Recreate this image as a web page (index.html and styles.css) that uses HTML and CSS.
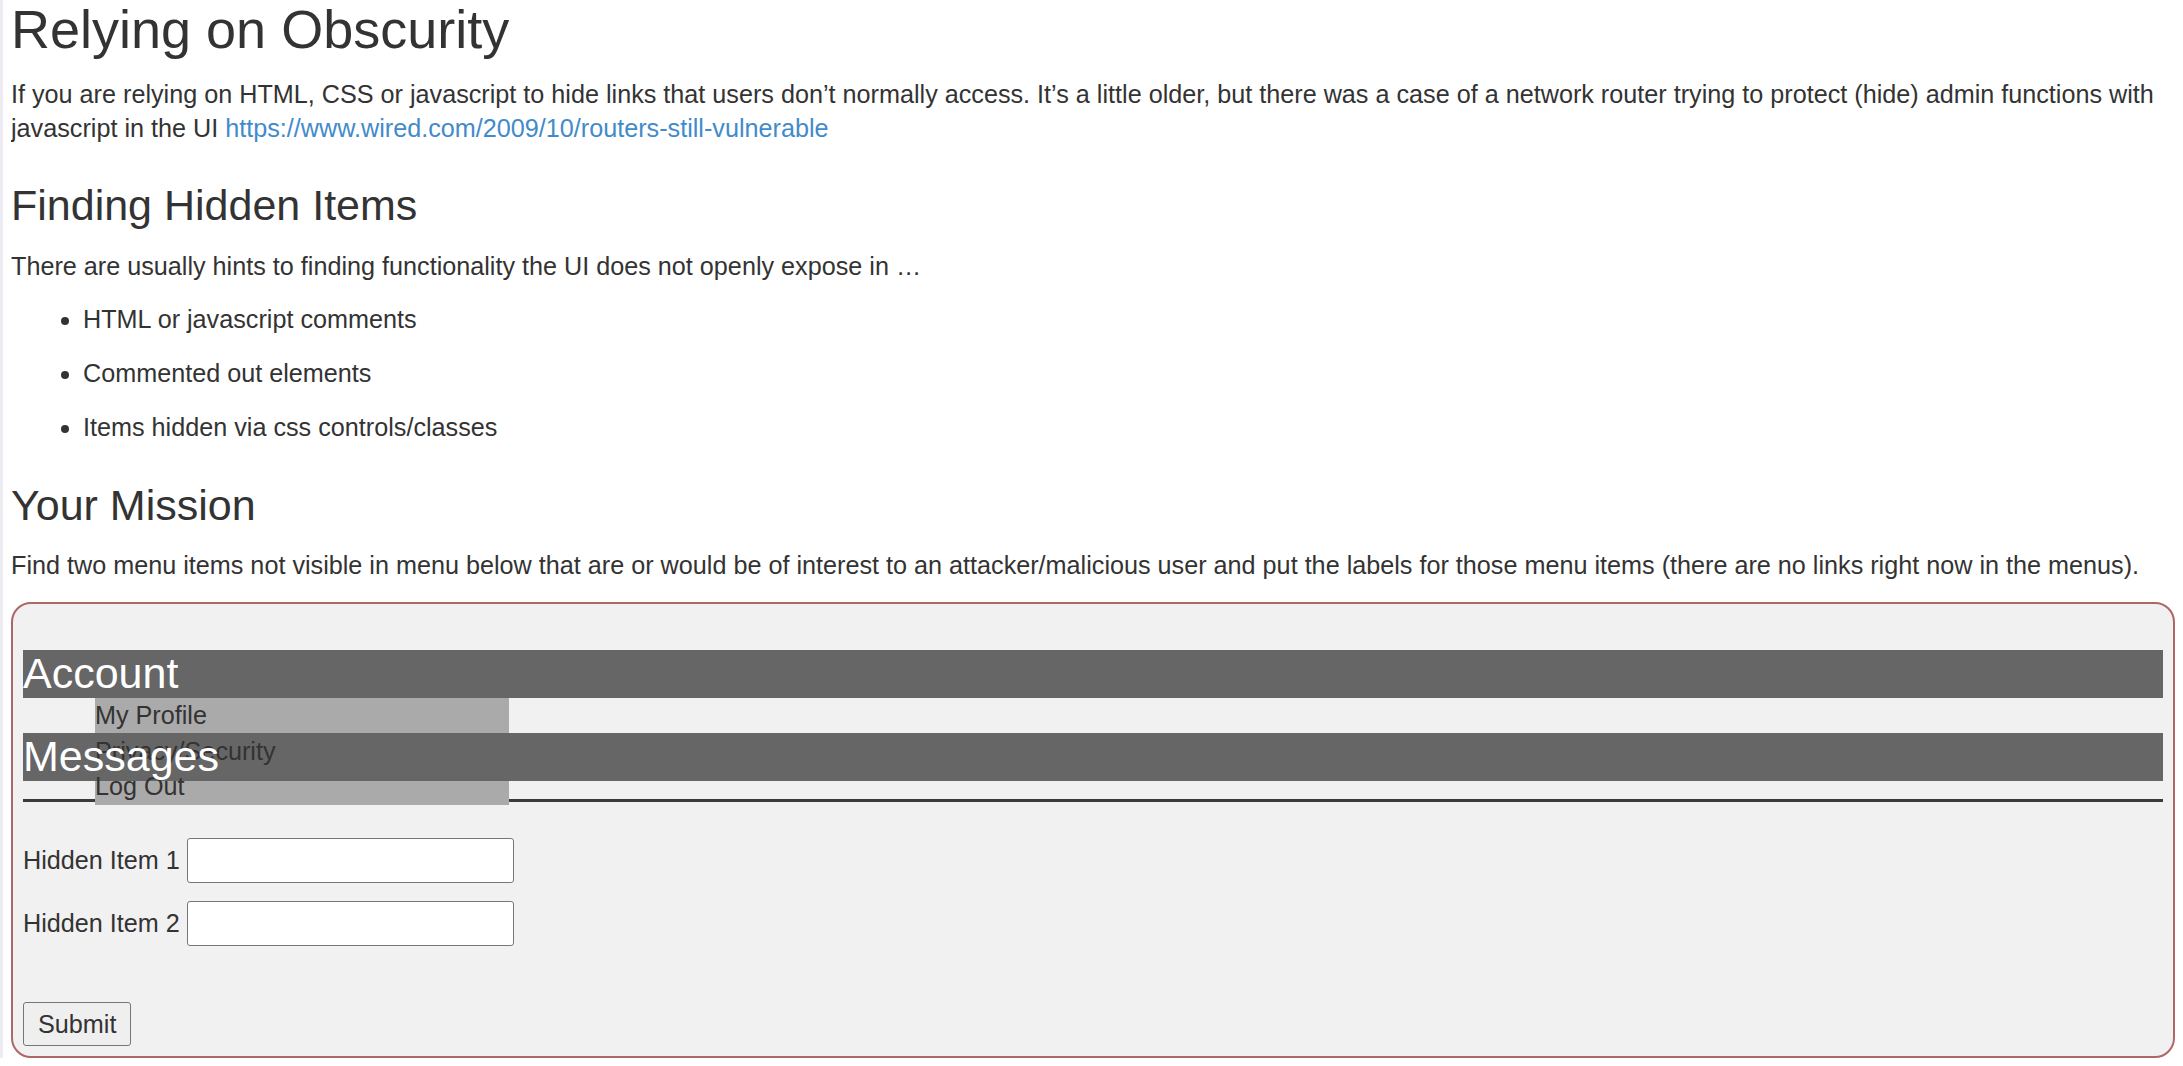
FILE: index.html
```html
<!DOCTYPE html>
<html lang="en">
<head>
<meta charset="utf-8">
<title>Relying on Obscurity</title>
<link rel="stylesheet" href="styles.css">
</head>
<body>
<h1 class="page-title">Relying on Obscurity</h1>
<p class="text">If you are relying on HTML, CSS or javascript to hide links that users don’t normally access. It’s a little older, but there was a case of a network router trying to protect (hide) admin functions with javascript in the UI <a class="link" href="#">https://www.wired.com/2009/10/routers-still-vulnerable</a></p>
<h2 class="section-title">Finding Hidden Items</h2>
<p class="text">There are usually hints to finding functionality the UI does not openly expose in …</p>
<ul class="hints">
  <li class="hint">HTML or javascript comments</li>
  <li class="hint">Commented out elements</li>
  <li class="hint">Items hidden via css controls/classes</li>
</ul>
<h2 class="section-title">Your Mission</h2>
<p class="text">Find two menu items not visible in menu below that are or would be of interest to an attacker/malicious user and put the labels for those menu items (there are no links right now in the menus).</p>
<div class="mission">
  <ul class="menu">
    <li class="menu-item menu-item-open">
      <h2 class="menu-title">Account</h2>
      <ul class="submenu">
        <li class="submenu-item">My Profile</li>
        <li class="submenu-item">Privacy/Security</li>
        <li class="submenu-item">Log Out</li>
      </ul>
    </li>
    <li class="menu-item">
      <h2 class="menu-title">Messages</h2>
    </li>
  </ul>
  <form class="answers">
    <div class="field"><label class="field-label">Hidden Item 1</label><input class="field-input" type="text"></div>
    <div class="field"><label class="field-label">Hidden Item 2</label><input class="field-input" type="text"></div>
    <div class="actions"><button class="submit" type="button">Submit</button></div>
  </form>
</div>
</body>
</html>
```
FILE: styles.css
```css
html {
  border-left: 3px solid #ececf2;
  background: #ffffff;
}
body {
  margin: 0 8px 0 8px;
  font-family: "Liberation Sans", Arial, sans-serif;
  font-size: 25.2px;
  line-height: 33.5px;
  color: #333333;
}
.page-title {
  margin: 0 0 19px;
  font-size: 54px;
  line-height: 1.1;
  font-weight: 400;
  color: #333333;
}
.section-title {
  margin: 37px 0 20px;
  font-size: 43px;
  line-height: 1.1;
  font-weight: 400;
  color: #333333;
}
.text {
  margin: 0 0 20px;
}
.link {
  color: #428bca;
  text-decoration: none;
}
.hints {
  margin: 0 0 20px;
  padding-left: 72px;
}
.hint {
  margin-bottom: 20.5px;
}
.mission {
  border: 2px solid #ad6767;
  border-radius: 20px;
  background: #f1f1f1;
  padding: 10px;
}
.menu {
  list-style: none;
  margin: 36px 0 0;
  padding: 0;
  height: 149px;
  border-bottom: 3px solid #3b3b3b;
}
.menu-item-open {
  height: 83px;
}
.menu-title {
  margin: 0;
  background: #666666;
  color: #ffffff;
  font-size: 43px;
  line-height: 47.5px;
  font-weight: 400;
}
.submenu {
  list-style: none;
  margin: 0;
  padding: 0 0 0 72px;
}
.submenu-item {
  width: 414px;
  background: #aaaaaa;
  line-height: 35.7px;
  color: #333333;
}
.answers {
  margin: 36px 0 0;
}
.field {
  display: flex;
  align-items: center;
  gap: 7px;
  margin-bottom: 18px;
}
.field-input {
  width: 327px;
  height: 45px;
  box-sizing: border-box;
  border: 1px solid #767676;
  border-radius: 3px;
  background: #ffffff;
  padding: 0 6px;
  margin: 0;
  font: inherit;
}
.actions {
  padding-top: 38px;
}
.submit {
  font-family: "Liberation Sans", Arial, sans-serif;
  font-size: 25.2px;
  line-height: 30px;
  padding: 6px 14px;
  margin: 0;
  color: #333333;
  background: #efefef;
  border: 1px solid #767676;
  border-radius: 3px;
}
```
